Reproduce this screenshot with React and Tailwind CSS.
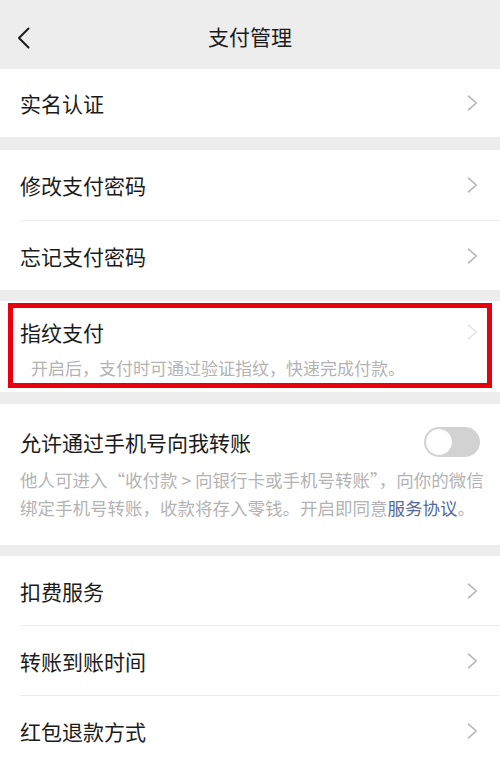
import React from "react";

const font = { fontFamily: '"Noto Sans CJK SC", "Noto Sans", sans-serif' };

function Chevron({ faint }) {
  return (
    <svg width="11" height="16" viewBox="0 0 11 16" className="shrink-0">
      <path
        d="M1.5 1.2 L9.3 8 L1.5 14.8"
        fill="none"
        stroke={faint ? "#e4e4e4" : "#b5b5b5"}
        strokeWidth="1.6"
        strokeLinecap="round"
        strokeLinejoin="round"
      />
    </svg>
  );
}

function Row({ label, divider, h = "h-[69px]" }) {
  return (
    <div className="relative">
      <div className={`flex ${h} items-center justify-between pl-[20px] pr-[22px]`}>
        <span className="text-[21px] leading-[28px] text-[#1b1b1b]">{label}</span>
        <Chevron />
      </div>
      {divider && <div className="ml-[20px] h-px bg-[#ececec]" />}
    </div>
  );
}

export default function App() {
  return (
    <div className="h-[760px] w-[500px] overflow-hidden bg-[#ededed]" style={font}>
      {/* header */}
      <div className="relative flex h-[69px] items-center justify-center">
        <div className="absolute left-[17px] top-[27px]">
          <svg width="14" height="22" viewBox="0 0 14 22">
            <path d="M11.5 1.5 L2 11 L11.5 20.5" fill="none" stroke="#1c1c1c" strokeWidth="2" strokeLinecap="round" strokeLinejoin="round" />
          </svg>
        </div>
        <span className="mt-[2px] text-[21px] leading-[28px] text-[#1b1b1b]">支付管理</span>
      </div>

      <div className="bg-white">
        <Row label="实名认证" h="h-[68px]" />
      </div>

      <div className="mt-[13px] bg-white">
        <Row label="修改支付密码" divider h="h-[70px]" />
        <Row label="忘记支付密码" />
      </div>

      {/* fingerprint */}
      <div className="relative mt-[11px] bg-white pb-[12px] pl-[20px] pr-[22px] pt-[17px]">
        <div className="flex items-center justify-between">
          <span className="text-[21px] leading-[28px] text-[#1b1b1b]">指纹支付</span>
          <Chevron faint />
        </div>
        <div className="mt-[10px] pl-[11px] text-[17px] leading-[24px] text-[#b3b3b3]">
          开启后，支付时可通过验证指纹，快速完成付款。
        </div>
        <div className="pointer-events-none absolute bottom-[4px] left-[8px] right-[8px] top-[2px] border-[5px] border-[#e8000d]" />
      </div>

      {/* phone transfer */}
      <div className="mt-[12px] bg-white pb-[23px] pl-[20px] pr-[20px] pt-[23px]">
        <div className="flex items-center justify-between">
          <span className="text-[21px] leading-[28px] text-[#1b1b1b]">允许通过手机号向我转账</span>
          <div className="relative h-[30px] w-[56px] rounded-full bg-[#d2d2d2]">
            <div className="absolute left-[1px] top-[1px] h-[28px] w-[28px] rounded-full border border-[#d0d0d0] bg-white" />
          </div>
        </div>
        <div className="mt-[9px] text-[17.5px] leading-[28px] text-[#b3b3b3]">
          <div className="h-[28px] whitespace-nowrap">他人可进入“收付款 &gt; 向银行卡或手机号转账”，向你的微信</div>
          <div className="h-[28px] whitespace-nowrap">
            绑定手机号转账，收款将存入零钱。开启即同意<span className="text-[#576b95]">服务协议</span>。
          </div>
        </div>
      </div>

      <div className="mt-[11px] bg-white">
        <Row label="扣费服务" divider />
        <Row label="转账到账时间" divider />
        <Row label="红包退款方式" h="h-[70px]" />
      </div>
    </div>
  );
}
